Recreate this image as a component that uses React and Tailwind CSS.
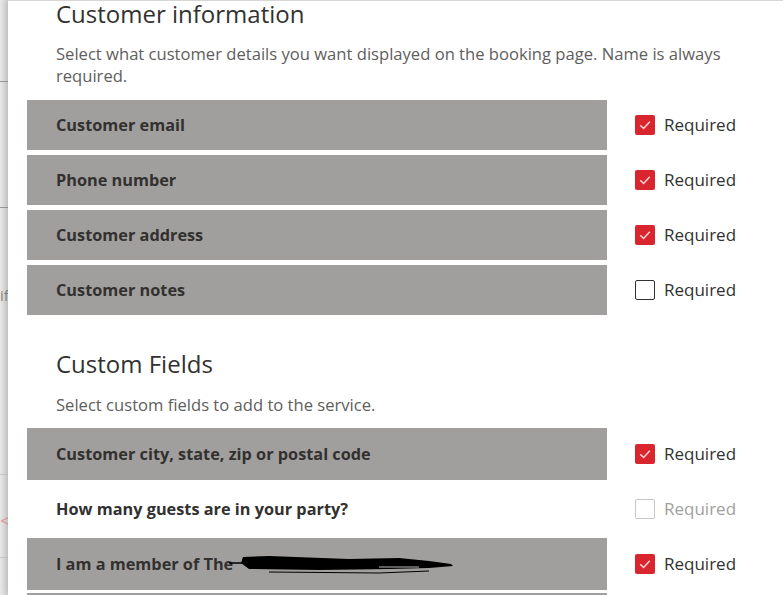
import React from "react";

const font = { fontFamily: '"Open Sans", "Noto Sans", sans-serif' };

function Check({ state }) {
  if (state === "on") {
    return (
      <span className="flex h-[20px] w-[20px] items-center justify-center rounded-[2px] bg-[#d9262e]">
        <svg width="14" height="14" viewBox="0 0 14 14" fill="none">
          <path d="M2.2 7.2 L5.6 10.4 L11.8 3.8" stroke="#fbd5d6" strokeWidth="1.5" />
        </svg>
      </span>
    );
  }
  if (state === "disabled") {
    return <span className="block h-[20px] w-[20px] rounded-[2px] border border-[#c8c6c4] bg-white" />;
  }
  return <span className="block h-[20px] w-[20px] rounded-[2px] border border-[#323130] bg-white" />;
}

function Row({ label, state = "on", shaded = true, h = "h-[50px]", children }) {
  return (
    <div className="flex items-center">
      <div
        className={`flex w-[580px] ${h} items-center pl-[29px] text-[16.3px] font-bold text-[#323130] ${
          shaded ? "bg-[#a19f9d]" : "bg-white"
        }`}
      >
        {label}
        {children}
      </div>
      <label className="ml-[28px] flex items-center gap-[9px]">
        <Check state={state} />
        <span
          className={`text-[17px] ${state === "disabled" ? "text-[#a19f9d]" : "text-[#323130]"}`}
        >
          Required
        </span>
      </label>
    </div>
  );
}

function Redacted() {
  return (
    <svg width="230" height="20" viewBox="0 0 230 20" className="-ml-[4px] mt-[2px]">
      <path d="M0 8 H30" stroke="#000" strokeWidth="1.5" />
      <path d="M14 2 L40 1 L120 4 L170 3 L200 6 L222 9 L224 11 L200 13 L160 14 L90 15 L20 14 L12 8 Z" fill="#000" />
      <path d="M40 17 L150 18 L200 16" stroke="#000" strokeWidth="1" fill="none" />
      <path d="M150 12 H190" stroke="#bbb" strokeWidth="1" />
    </svg>
  );
}

export default function App() {
  return (
    <div className="flex h-[595px] w-[783px] overflow-hidden bg-white" style={font}>
      {/* background page peeking out on the left */}
      <div className="flex w-[8px] flex-col bg-gradient-to-r from-[#e8e8e8] to-[#d4d4d4]">
        <div className="h-[82px] border-b border-[#9a9a9a]" />
        <div className="h-[126px] border-b border-[#9a9a9a]" />
        <div className="mt-[78px] text-[15px] leading-[18px] text-[#888]">if</div>
        <div className="mt-[170px] h-[1px] bg-[#c8c8c8]" />
        <div className="mt-[36px] text-[20px] leading-[20px] text-[#e0a0a8]">&lt;</div>
        <div className="mt-[26px] h-[1px] bg-[#c8c8c8]" />
      </div>

      <div className="flex-1 border-t border-[#d6d6d6] bg-white pl-[19px] shadow-[-2px_0_6px_rgba(0,0,0,0.12)]">
        <h2 className="pl-[29px] text-[24px] font-normal leading-[26px] text-[#323130]">
          Customer information
        </h2>
        <p className="mt-[16px] w-[700px] pl-[29px] text-[16.6px] leading-[22px] text-[#605e5c]">
          Select what customer details you want displayed on the booking page. Name is always
          required.
        </p>
        <div className="mt-[13px] flex flex-col gap-[5px]">
          <Row label="Customer email" />
          <Row label="Phone number" />
          <Row label="Customer address" />
          <Row label="Customer notes" state="off" />
        </div>

        <h2 className="mt-[33px] pl-[29px] text-[24px] font-normal leading-[32px] text-[#323130]">
          Custom Fields
        </h2>
        <p className="mt-[14px] pl-[29px] text-[16.6px] leading-[22px] text-[#605e5c]">
          Select custom fields to add to the service.
        </p>
        <div className="mt-[12px] flex flex-col gap-[3px]">
          <Row label="Customer city, state, zip or postal code" h="h-[52px]" />
          <Row label="How many guests are in your party?" h="h-[52px]" shaded={false} state="disabled" />
          <Row label="I am a member of The" h="h-[52px]">
            <Redacted />
          </Row>
          <div className="h-[20px] w-[580px] bg-[#a19f9d]" />
        </div>
      </div>
    </div>
  );
}
